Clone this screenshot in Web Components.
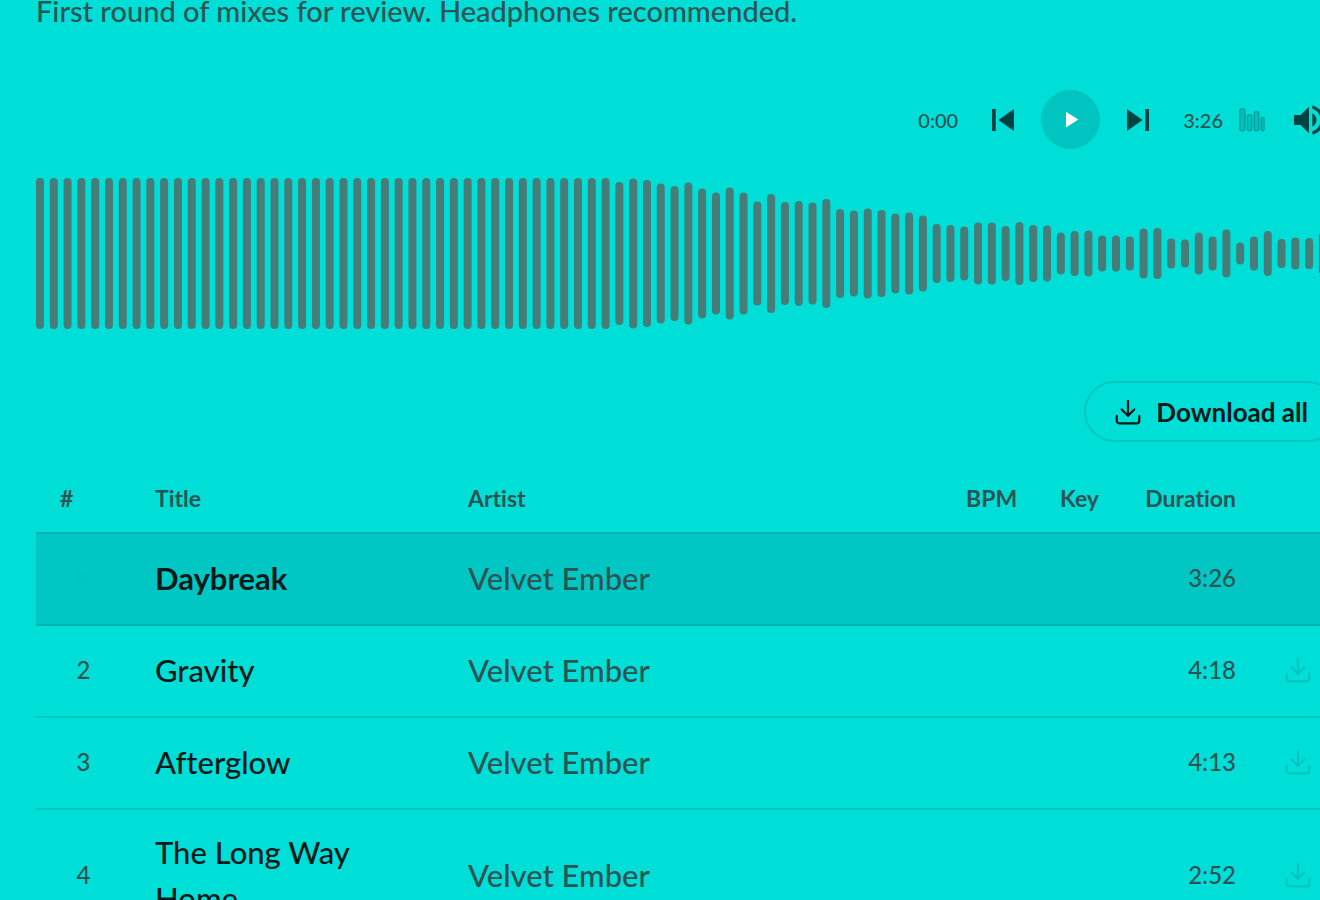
<!DOCTYPE html>
<html lang="en">
<head>
<meta charset="utf-8">
<meta name="viewport" content="width=device-width, initial-scale=1">
<title>Mixes for review</title>
<style>
    body {
        --ink: #001a19;
        --muted: #2b5453;
        --icon: #004340;
        --accent: #00c4bf;
        --line: rgba(0, 60, 60, .14);
        --active: #00c7c3;
        --wave: #477c79;
        margin: 0;
        background: #00ded8;
        color: var(--ink);
        font-family: Lato, "Noto Sans", sans-serif;
        font-weight: 500;
        font-variant-ligatures: none;
        overflow: hidden;
    }
</style>
</head>
<body>

<playlist-page>
    <span slot="description">First round of mixes for review. Headphones recommended.</span>
    <audio-player elapsed="0:00" duration="3:26"></audio-player>
    <wave-form></wave-form>
    <download-button>Download all</download-button>
    <track-list></track-list>
</playlist-page>

<script>
const downloadIcon = `
    <svg viewBox="0 0 24 24" width="30" height="30" fill="none" stroke="currentColor" stroke-width="1.8" stroke-linecap="round" stroke-linejoin="round" aria-hidden="true">
        <path d="M21 15v4a2 2 0 0 1-2 2H5a2 2 0 0 1-2-2v-4" />
        <path d="M7 10l5 5 5-5" />
        <path d="M12 15V3" />
    </svg>
`;

const buttonReset = `
    button {
        display: flex;
        align-items: center;
        justify-content: center;
        padding: 0;
        border: 0;
        background: none;
        color: inherit;
        font: inherit;
        cursor: pointer;
    }

    svg {
        display: block;
        flex: none;
    }
`;


class PlaylistPage extends HTMLElement {

    constructor() {
        super();

        this.attachShadow({ mode: 'open' }).innerHTML = `
            <style>
                :host {
                    display: block;
                }

                /* the column runs a little past the right edge of the window */
                main {
                    display: flex;
                    flex-direction: column;
                    margin: 0 -18px 0 36px;
                }

                p {
                    margin: 0 0 68px;
                    color: var(--muted);
                    font-size: 29px;
                    line-height: 22px;
                }
            </style>

            <main>
                <p><slot name="description"></slot></p>
                <slot></slot>
            </main>
        `;
    }
}

window.customElements.define('playlist-page', PlaylistPage);


class AudioPlayer extends HTMLElement {

    constructor() {
        super();

        this.attachShadow({ mode: 'open' });
    }

    connectedCallback() {
        this.shadowRoot.innerHTML = `
            <style>
                ${buttonReset}

                :host {
                    display: flex;
                    align-items: center;
                    justify-content: flex-end;
                    padding-right: 9px;
                    color: var(--icon);
                }

                .controls {
                    display: flex;
                    align-items: center;
                    gap: 16px;
                    margin: 0 23px;
                }

                .play {
                    width: 59px;
                    height: 59px;
                    border-radius: 50%;
                    background: var(--accent);
                    color: white;
                }

                .visualizer {
                    margin: 0 24px 0 16px;
                }

                time {
                    color: var(--muted);
                    font-size: 20px;
                }
            </style>

            <time>${this.getAttribute('elapsed')}</time>

            <div class="controls">
                <button aria-label="Previous">
                    <svg viewBox="0 0 24 24" width="44" height="44" fill="currentColor">
                        <path d="M6 6h2v12H6zm3.5 6l8.5 6V6z" />
                    </svg>
                </button>

                <button class="play" aria-label="Play">
                    <svg viewBox="0 0 24 24" width="27" height="27" fill="currentColor">
                        <path d="M8 5v14l11-7z" />
                    </svg>
                </button>

                <button aria-label="Next">
                    <svg viewBox="0 0 24 24" width="44" height="44" fill="currentColor">
                        <path d="M6 18l8.5-6L6 6v12zM16 6v12h2V6h-2z" />
                    </svg>
                </button>
            </div>

            <time>${this.getAttribute('duration')}</time>

            <button class="visualizer" aria-label="Visualizer">
                <svg viewBox="0 0 26 24" width="26" height="24" fill="#00c0bb" stroke="#009b97" stroke-width="1.3">
                    <rect x="0.9" y="0.9" width="5" height="22" rx="1.8" />
                    <rect x="8.4" y="7" width="4.4" height="15.9" rx="1.8" />
                    <rect x="15.2" y="3.6" width="4.6" height="19.3" rx="1.8" />
                    <rect x="22.2" y="9.4" width="2.8" height="13.5" rx="1.4" />
                </svg>
            </button>

            <button aria-label="Volume">
                <svg viewBox="0 0 24 24" width="40" height="40" fill="currentColor">
                    <path d="M3 9v6h4l5 5V4L7 9H3zm13.5 3c0-1.77-1.02-3.29-2.5-4.03v8.05c1.48-.73 2.5-2.25 2.5-4.02zM14 3.23v2.06c2.89.86 5 3.54 5 6.71s-2.11 5.85-5 6.71v2.06c4.01-.91 7-4.49 7-8.77s-2.99-7.86-7-8.77z" />
                </svg>
            </button>
        `;
    }
}

window.customElements.define('audio-player', AudioPlayer);


const peaks = [
    ...Array(42).fill(151),
    143, 150, 147, 140, 135, 142, 130, 122, 132, 122, 104, 119, 103, 105, 102, 109,
    89, 86, 90, 87, 80, 82, 76, 59, 57, 54, 62, 62, 55, 63, 57, 56,
    42, 45, 46, 36, 36, 34, 50, 51, 30, 28, 42, 34, 48, 22, 34, 45, 29, 32, 31, 42
];

class WaveForm extends HTMLElement {

    constructor() {
        super();

        const bars = peaks.map((peak, i) =>
            `<rect x="${(i * 13.795).toFixed(2)}" y="${(151 - peak) / 2}" width="8" height="${peak}" rx="4" />`
        ).join('');

        this.attachShadow({ mode: 'open' }).innerHTML = `
            <style>
                :host {
                    display: block;
                    margin: 29px 0 52px;
                    overflow: hidden;
                }

                svg {
                    display: block;
                    fill: var(--wave);
                }
            </style>

            <svg width="1302" height="151" role="img" aria-label="Waveform">${bars}</svg>
        `;
    }
}

window.customElements.define('wave-form', WaveForm);


class DownloadButton extends HTMLElement {

    constructor() {
        super();

        this.attachShadow({ mode: 'open' }).innerHTML = `
            <style>
                ${buttonReset}

                :host {
                    display: block;
                    align-self: flex-end;
                    margin-bottom: 22px;
                }

                button {
                    gap: 13px;
                    height: 61px;
                    padding: 0 28px 0 27px;
                    border: 2px solid var(--line);
                    border-radius: 31px;
                    font-size: 26px;
                    font-weight: 700;
                }
            </style>

            <button>${downloadIcon}<slot></slot></button>
        `;
    }
}

window.customElements.define('download-button', DownloadButton);


const tracks = [
    { title: 'Daybreak', artist: 'Velvet Ember', duration: '3:26', active: true },
    { title: 'Gravity', artist: 'Velvet Ember', duration: '4:18' },
    { title: 'Afterglow', artist: 'Velvet Ember', duration: '4:13' },
    { title: 'The Long Way Home', artist: 'Velvet Ember', duration: '2:52' }
];

const playMark = `
    <svg viewBox="0 0 20 24" width="20" height="24" fill="currentColor" role="img" aria-label="Playing">
        <path d="M0 0v24l20-12z" />
    </svg>
`;

class TrackList extends HTMLElement {

    constructor() {
        super();

        this.attachShadow({ mode: 'open' }).innerHTML = `
            <style>
                ${buttonReset}

                :host {
                    display: block;
                }

                table {
                    width: 100%;
                    border-collapse: separate;
                    border-spacing: 0;
                    table-layout: fixed;
                    text-align: left;
                }

                .index { width: 95px; }
                .title { width: 313px; }
                .bpm { width: 94px; }
                .key { width: 85px; }
                .duration { width: 139px; }
                .action { width: 78px; }

                th, td {
                    box-sizing: border-box;
                    padding: 0 24px;
                }

                th {
                    height: 68px;
                    color: var(--muted);
                    font-size: 23px;
                    font-weight: 700;
                }

                td {
                    height: 92px;
                    padding: 19px 24px 21px;
                    border-bottom: 2px solid var(--line);
                    color: var(--muted);
                    font-size: 31px;
                    line-height: 46px;
                }

                tbody tr:first-child td {
                    height: 94px;
                    border-top: 2px solid var(--line);
                }

                td:nth-child(1) {
                    font-size: 24px;
                    text-align: center;
                }

                td:nth-child(1) svg {
                    margin: 0 auto;
                    color: var(--accent);
                }

                td:nth-child(2) {
                    color: var(--ink);
                }

                td:nth-child(6) {
                    font-size: 24px;
                }

                th:nth-child(6), td:nth-child(6) {
                    text-align: right;
                }

                td:nth-child(7) {
                    padding-left: 23px;
                    color: var(--accent);
                }

                .active td {
                    background: var(--active);
                }

                .active td:nth-child(2) {
                    font-weight: 700;
                }
            </style>

            <table>
                <colgroup>
                    <col class="index"><col class="title"><col><col class="bpm">
                    <col class="key"><col class="duration"><col class="action">
                </colgroup>
                <thead>
                    <tr><th>#</th><th>Title</th><th>Artist</th><th>BPM</th><th>Key</th><th>Duration</th><th></th></tr>
                </thead>
                <tbody>
                    ${tracks.map((track, i) => this.row(track, i + 1)).join('')}
                </tbody>
            </table>
        `;
    }

    row(track, number) {
        return `
            <tr${track.active ? ' class="active"' : ''}>
                <td>${track.active ? playMark : number}</td>
                <td>${track.title}</td>
                <td>${track.artist}</td>
                <td></td>
                <td></td>
                <td>${track.duration}</td>
                <td><button aria-label="Download ${track.title}">${downloadIcon}</button></td>
            </tr>
        `;
    }
}

window.customElements.define('track-list', TrackList);
</script>
</body>
</html>
